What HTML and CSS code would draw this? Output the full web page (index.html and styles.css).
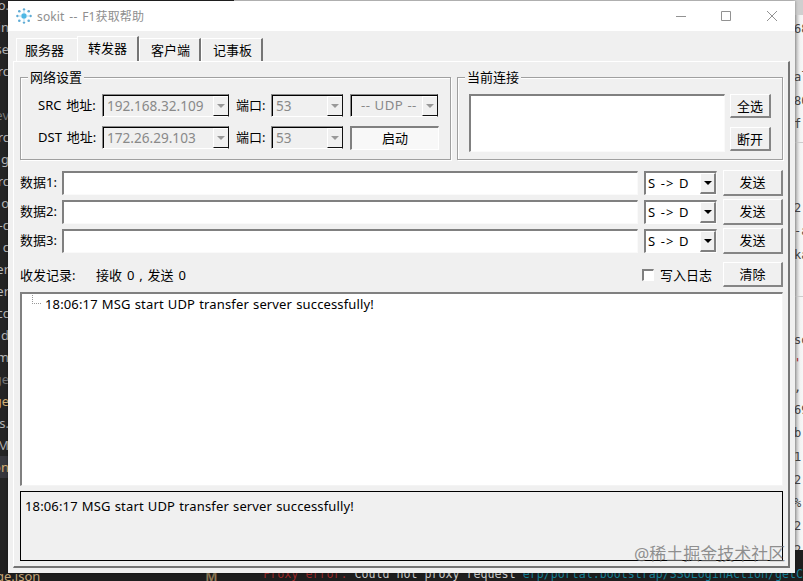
FILE: index.html
```
<!DOCTYPE html>
<html lang="zh-CN">
<head>
  <meta charset="UTF-8" />
  <meta name="viewport" content="width=device-width, initial-scale=1.0"/>
  <title>sokit -- F1获取帮助</title>
  <link rel="stylesheet" href="styles.css">
</head>
<body>
  <div class="desktop">
    <div class="back-top"></div>
    <div class="back-files">
      <span>o.</span><span>in</span><span>se</span><span>rc</span><span></span><span class="dim">ev</span><span>rc</span><span>g</span><span>rc</span><span>o</span><span>-c</span><span>c</span><span>er</span><span>er</span><span>cc</span><span>d</span><span>m</span><span class="dim">ge</span><span class="changed">ge</span><span>s.</span><span>M</span><span class="changed selected">on</span>
    </div>
    <div class="back-page">
      <span class="line-68">68</span><span class="line-al">al</span><span>80</span><span>f</span><span class="rule"></span><span class="line-2">2</span><span>-a</span><span>ka</span><span class="rule second"></span><span class="line-so">so</span><span class="red">'</span><span>,</span><span>69</span><span>b</span><span>1</span><span>2</span><span>%</span><span>2</span><span>2</span>
    </div>
    <div class="back-terminal">
      <span class="file">ge.json</span><span class="flag">M</span>
      <span class="output"><span class="error">Proxy error:</span> Could not proxy request <span class="path">erp/portal.bootstrap/SSOLoginAction/getC</span></span>
    </div>

    <div class="window">
      <div class="titlebar">
        <svg class="logo" viewBox="0 0 16 16">
          <circle cx="8" cy="8" r="2.7" fill="#4fb8e4"/>
          <g fill="#5eabd5">
            <circle cx="8" cy="1.4" r="1.2"/><circle cx="12.7" cy="3.3" r="1.3"/>
            <circle cx="14.6" cy="8" r="1.2"/><circle cx="12.7" cy="12.7" r="1.3"/>
            <circle cx="8" cy="14.6" r="1.2"/><circle cx="3.3" cy="12.7" r="1.3"/>
            <circle cx="1.4" cy="8" r="1.2"/><circle cx="3.3" cy="3.3" r="1.3"/>
          </g>
          <path d="M8 3v2M13 8h-2M8 13v-2M3 8h2" stroke="#a9def3" fill="none"/>
        </svg>
        <span class="title">sokit -- F1获取帮助</span>
        <svg class="controls" viewBox="0 0 102 12">
          <path d="M0 6.5h10M45.5 1.5h9v9h-9zM91 1l10 10M101 1L91 11" fill="none" stroke="#929292"/>
        </svg>
      </div>

      <div class="tabs">
        <div class="tab first">服务器</div>
        <div class="tab active">转发器</div>
        <div class="tab">客户端</div>
        <div class="tab">记事板</div>
      </div>

      <div class="pane">
        <div class="groups">
          <div class="group network">
            <span class="legend">网络设置</span>
            <div class="net-row">
              <label>SRC 地址:</label>
              <div class="combo disabled"><span>192.168.32.109</span><i class="arrow"></i></div>
              <label>端口:</label>
              <div class="combo disabled"><span>53</span><i class="arrow"></i></div>
              <div class="combo disabled protocol"><span>-- UDP --</span><i class="arrow"></i></div>
            </div>
            <div class="net-row">
              <label>DST 地址:</label>
              <div class="combo disabled"><span>172.26.29.103</span><i class="arrow"></i></div>
              <label>端口:</label>
              <div class="combo disabled"><span>53</span><i class="arrow"></i></div>
              <div class="start">启动</div>
            </div>
          </div>
          <div class="group connections">
            <span class="legend">当前连接</span>
            <div class="conn-list"></div>
            <div class="conn-buttons">
              <div class="btn">全选</div>
              <div class="btn">断开</div>
            </div>
          </div>
        </div>

        <div class="data">
          <div class="data-row">
            <label>数据1:</label><div class="field"></div>
            <div class="combo"><span>S -&gt; D</span><i class="arrow"></i></div>
            <div class="btn">发送</div>
          </div>
          <div class="data-row">
            <label>数据2:</label><div class="field"></div>
            <div class="combo"><span>S -&gt; D</span><i class="arrow"></i></div>
            <div class="btn">发送</div>
          </div>
          <div class="data-row">
            <label>数据3:</label><div class="field"></div>
            <div class="combo"><span>S -&gt; D</span><i class="arrow"></i></div>
            <div class="btn">发送</div>
          </div>
        </div>

        <div class="record">
          <span class="record-label">收发记录:</span>
          <span class="counts">接收 0 , 发送 0</span>
          <i class="checkbox"></i>
          <span class="write-log">写入日志</span>
          <div class="btn">清除</div>
        </div>

        <div class="log"><i class="branch"></i><span class="message">18:06:17 MSG start UDP transfer server successfully!</span></div>
        <div class="status"><span class="message">18:06:17 MSG start UDP transfer server successfully!</span></div>
      </div>
    </div>
    <div class="watermark">@稀土掘金技术社区</div>
  </div>
</body>
</html>
```
FILE: styles.css
```
* {
  box-sizing: border-box;
}

body {
  margin: 0;
  font-family: "Noto Sans", "Noto Sans CJK SC", sans-serif;
  font-size: 13px;
  color: #000;
}

.desktop {
  position: relative;
  width: 803px;
  height: 581px;
  overflow: hidden;
  background: #242424;
  white-space: nowrap;
}

/* windows behind the dialog */
.back-top {
  position: absolute;
  top: 0;
  left: 234px;
  right: 0;
  height: 15px;
  background: #cfcfcf;
}

.back-files {
  position: absolute;
  top: -6px;
  left: -12px;
  width: 21px;
  display: flex;
  flex-direction: column;
  color: #b5b5b5;
  font-size: 13px;
}

.back-files span {
  height: 22px;
  line-height: 22px;
  text-align: right;
}

.back-files .dim {
  color: #777;
}

.back-files .changed {
  color: #d6b276;
}

.back-files .selected {
  background: #37373d;
}

.back-page {
  position: absolute;
  top: 15px;
  left: 795px;
  width: 8px;
  height: 535px;
  display: flex;
  flex-direction: column;
  overflow: hidden;
  background: linear-gradient(90deg, #b8b8b8, #f2f2f2 5px, #f7f7f7);
  color: #444;
  font-family: "DejaVu Sans Mono", monospace;
  font-size: 12px;
}

.back-page span {
  flex: none;
  height: 23.3px;
  line-height: 23.3px;
  text-indent: -1px;
}

.back-page .line-68 {
  margin-top: 3px;
}

.back-page .line-al {
  margin-top: 25px;
}

.back-page .rule {
  height: 1px;
  margin-top: 6px;
  background: #ccc;
}

.back-page .line-2 {
  margin-top: 54px;
}

.back-page .rule.second {
  margin-top: 29px;
}

.back-page .line-so {
  margin-top: 32px;
}

.back-page .red {
  color: #a22;
}

.back-terminal {
  position: absolute;
  top: 550px;
  left: 0;
  width: 803px;
  height: 31px;
  padding-top: 16px;
  display: flex;
  overflow: hidden;
  background: #1e1e1e;
  line-height: 20px;
}

.back-terminal .file {
  width: 213px;
  margin-left: -4px;
  color: #c5a678;
}

.back-terminal .flag {
  width: 59px;
  color: #8c7855;
  font-weight: bold;
}

.back-terminal .output {
  color: #ccc;
  font-family: "DejaVu Sans Mono", monospace;
  font-size: 11.65px;
  line-height: 16px;
}

.back-terminal .error {
  color: #9c2929;
}

.back-terminal .path {
  color: #168299;
}

/* dialog */
.window {
  position: absolute;
  top: 1px;
  left: 8px;
  width: 787px;
  height: 572px;
  background: #f0f0f0;
  box-shadow: 0 0 3px rgba(0, 0, 0, 0.4);
}

.titlebar {
  display: flex;
  align-items: center;
  height: 30px;
  padding: 0 17px 0 8px;
  background: #fff;
  color: #8e8e8e;
}

.logo {
  width: 16px;
  height: 16px;
}

.title {
  flex: 1;
  margin-left: 5px;
  font-size: 12px;
  letter-spacing: 0.15px;
  word-spacing: 1.5px;
}

.controls {
  width: 102px;
  height: 12px;
}

.tabs {
  display: flex;
  align-items: flex-end;
  height: 30px;
  padding-left: 8px;
}

.tab {
  width: 62px;
  height: 23px;
  padding-left: 2px;
  border-top: 1px solid #fff;
  border-left: 1px solid #fff;
  border-right: 2px solid #757575;
  line-height: 23px;
  text-align: center;
}

.tab.first {
  width: 61px;
  border-right: 0;
  padding: 0 5px 0 0;
}

.tab.active {
  height: 25px;
  padding-left: 0;
}

.pane {
  height: 507px;
  margin: 0 5px;
  padding: 9px 5px 0 6px;
  border: 1px solid #fff;
  border-right: 2px solid #757575;
  border-bottom: 2px solid #757575;
}

.groups {
  display: grid;
  grid-template-columns: 431px 326px;
  gap: 6px;
  margin-top: 6px;
}

.group {
  position: relative;
  height: 83px;
  border: 1px solid #a0a0a0;
  box-shadow: 1px 1px #fff, inset 1px 1px #fff;
}

.legend {
  position: absolute;
  top: -11px;
  left: 7px;
  padding: 0 2px;
  background: #f0f0f0;
  line-height: 20px;
}

.network {
  padding: 16px 12px 0 17px;
}

.net-row {
  display: grid;
  grid-template-columns: 64px 127px 42px 72px 7px 89px;
  height: 23px;
  margin-bottom: 9px;
  line-height: 22px;
}

.net-row .combo.protocol,
.net-row .start {
  grid-column: 6;
}

.net-row label {
  word-spacing: 1.5px;
}

.net-row label:nth-of-type(2) {
  padding-left: 7px;
}

.combo {
  display: flex;
  height: 24px;
  border: 2px solid #808080;
  border-right: 1px solid #f8f8f8;
  border-bottom: 1px solid #fff;
  background: #fff;
  line-height: 21px;
}

.combo span {
  flex: 1;
  padding-left: 2px;
  letter-spacing: 0.9px;
  word-spacing: 0.5px;
}

.combo.disabled {
  height: 23px;
  border: 1px solid #8a8a8a;
  border-right-color: #111;
  border-bottom-color: #fff;
  box-shadow: inset 1px 1px #000;
  background: #f0f0f0;
  color: #898989;
  line-height: 21px;
}

.combo.disabled span {
  padding-left: 4px;
  font-size: 13.6px;
  letter-spacing: 0;
}

.combo.disabled.protocol {
  width: 88px;
}

.combo.disabled.protocol span {
  padding-left: 10px;
  font-size: 13.2px;
  letter-spacing: 0.4px;
}

.arrow {
  flex: none;
  position: relative;
  width: 16px;
  background: #f0f0f0;
  border: 1px solid #fff;
  border-right: 2px solid #808080;
  border-bottom: 2px solid #808080;
}

.disabled .arrow {
  width: 15px;
  margin-top: 1px;
  border-right: 0;
  border-bottom: 1px solid #111;
}

.arrow::before {
  content: "";
  position: absolute;
  top: 7px;
  left: 3px;
  border: 4px solid transparent;
  border-top-color: #000;
  border-bottom: 0;
}

.disabled .arrow::before {
  border-top-color: #999;
}

.start {
  border-top: 2px solid #808080;
  border-left: 2px solid #808080;
  border-right: 1px solid #fff;
  border-bottom: 1px solid #fff;
  background: #f8f8f8;
  line-height: 21px;
  text-align: center;
}

.connections {
  display: flex;
  padding: 16px 11px 0;
}

.conn-list {
  width: 256px;
  height: 58px;
  border: 2px solid #808080;
  border-right: 1px solid #fafafa;
  border-bottom: 1px solid #fafafa;
  background: #fff;
}

.conn-buttons {
  display: grid;
  grid-template-rows: 24px 24px;
  gap: 9px;
  width: 41px;
  margin-left: 5px;
}

.btn {
  border: 1px solid #fff;
  border-right: 2px solid #858585;
  border-bottom: 2px solid #858585;
  line-height: 23px;
  text-align: center;
}

.data {
  display: grid;
  gap: 4px;
  margin-top: 10px;
}

.data-row {
  display: grid;
  grid-template-columns: 36px 576px 73px 60px;
  column-gap: 6px;
  height: 25px;
  line-height: 25px;
}

.data-row .field {
  height: 24px;
  margin-top: 1px;
  border: 2px solid #808080;
  border-right: 1px solid #fafafa;
  border-bottom: 1px solid #fafafa;
  background: #fff;
}

.data-row .combo {
  margin-top: 1px;
  line-height: 20px;
}

.record {
  display: flex;
  align-items: center;
  height: 25px;
  margin-top: 9px;
}

.record-label {
  width: 76px;
}

.counts {
  width: 546px;
  word-spacing: 1.5px;
}

.checkbox {
  width: 12px;
  height: 12px;
  border: 2px solid #808080;
  border-right: 1px solid #fff;
  border-bottom: 1px solid #fff;
  background: #fff;
}

.write-log {
  width: 63px;
  margin-left: 6px;
}

.record .btn {
  width: 60px;
  height: 25px;
}

.log {
  display: flex;
  height: 194px;
  margin-top: 5px;
  border: 2px solid #808080;
  border-right: 1px solid #f4f4f4;
  border-bottom: 1px solid #f4f4f4;
  background: #fff;
  line-height: 20px;
}

.message {
  letter-spacing: 0.14px;
  word-spacing: 0.6px;
}

.branch {
  width: 9px;
  height: 9px;
  margin: 1px 4px 0 10px;
  border-left: 1px dotted #999;
  border-bottom: 1px dotted #999;
}

.status {
  height: 70px;
  margin-top: 5px;
  padding-left: 4px;
  border: 1px solid #000;
  line-height: 28px;
}

.watermark {
  position: absolute;
  top: 541px;
  left: 634px;
  color: rgba(110, 110, 110, 0.75);
  font-size: 17px;
  line-height: 25px;
}
```
